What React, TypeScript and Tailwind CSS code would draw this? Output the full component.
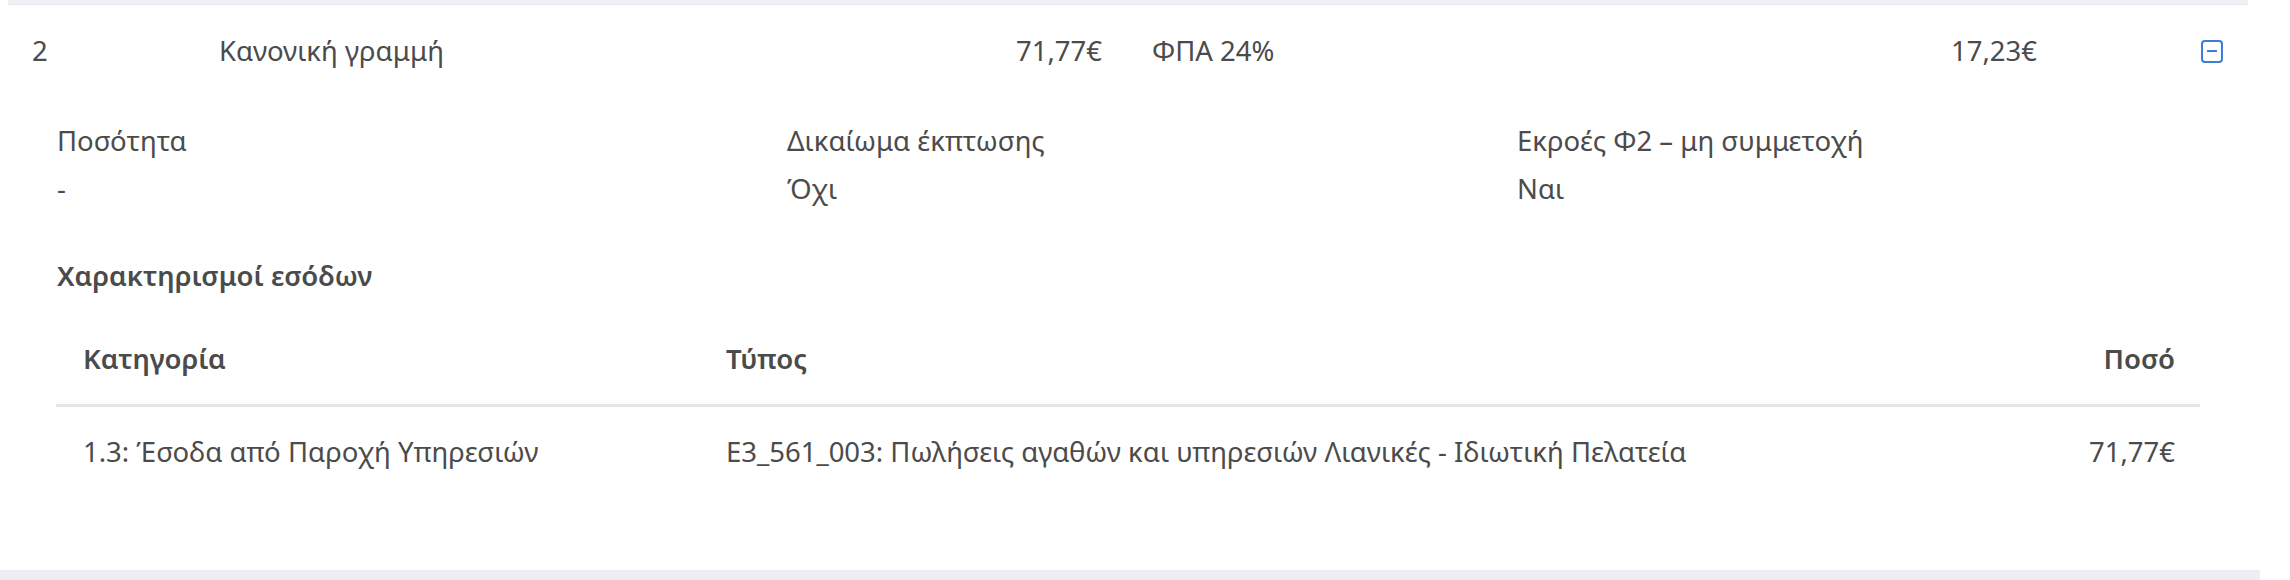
import React from "react";

const font = { fontFamily: '"Noto Sans", "Open Sans", sans-serif' };

function MinusBox() {
  return (
    <div className="w-[22px] h-[23px] rounded-[4px] border-2 border-[#3b7dd8] flex items-center justify-center">
      <div className="w-[10px] h-[2px] bg-[#3b7dd8]" />
    </div>
  );
}

function Detail({ label, value }: { label: string; value: string }) {
  return (
    <div className="flex flex-col gap-3">
      <span className="leading-[36px]">{label}</span>
      <span className="leading-[36px]">{value}</span>
    </div>
  );
}

export default function App() {
  return (
    <div
      className="w-[2290px] h-[580px] bg-white text-[27.5px] text-[#4b4b4b] flex flex-col"
      style={font}
    >
      <div className="h-[5px] ml-[8px] mr-[42px] bg-[#eef0f4] border-b border-[#e4e6ea]" />

      {/* line row */}
      <div className="h-[92px] flex items-center leading-[36px]">
        <div className="w-[219px] pl-[32px]">2</div>
        <div className="w-[703px]">Κανονική γραμμή</div>
        <div className="w-[180px] text-right">71,77€</div>
        <div className="w-[700px] ml-[50px]">ΦΠΑ 24%</div>
        <div className="w-[185px] text-right">17,23€</div>
        <div className="ml-[164px]">
          <MinusBox />
        </div>
      </div>

      {/* details */}
      <div className="grid grid-cols-3 pl-[57px] pr-[43px] mt-[26px]">
        <Detail label="Ποσότητα" value="-" />
        <Detail label="Δικαίωμα έκπτωσης" value="Όχι" />
        <Detail label="Εκροές Φ2 – μη συμμετοχή" value="Ναι" />
      </div>

      <div className="pl-[57px] mt-[51px] leading-[36px] font-semibold">
        Χαρακτηρισμοί εσόδων
      </div>

      <div className="ml-[56px] mr-[90px] mt-[20px]">
        <div className="grid grid-cols-[670px_1fr_300px] border-b-[3px] border-[#e4e5e8] font-semibold leading-[36px]">
          <div className="pl-[27px] py-[27px]">Κατηγορία</div>
          <div className="py-[27px]">Τύπος</div>
          <div className="pr-[25px] py-[27px] text-right">Ποσό</div>
        </div>
        <div className="grid grid-cols-[670px_1fr_300px] leading-[36px]">
          <div className="pl-[27px] py-[27px]">1.3: Έσοδα από Παροχή Υπηρεσιών</div>
          <div className="py-[27px]">
            E3_561_003: Πωλήσεις αγαθών και υπηρεσιών Λιανικές - Ιδιωτική Πελατεία
          </div>
          <div className="pr-[25px] py-[27px] text-right">71,77€</div>
        </div>
      </div>

      <div className="mt-auto h-[10px] mr-[30px] bg-[#eceef2]" />
    </div>
  );
}
